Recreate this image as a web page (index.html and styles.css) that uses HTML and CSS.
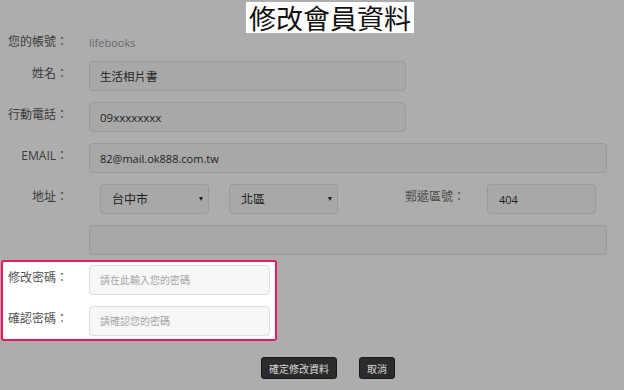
FILE: index.html
```html
<!DOCTYPE html>
<html lang="zh-Hant">
<head>
    <meta charset="UTF-8">
    <meta name="viewport" content="width=device-width, initial-scale=1.0">
    <title>修改會員資料</title>
    <link rel="stylesheet" href="styles.css">
</head>
<body>
    <div class="title-wrap">
        <h1 class="title">修改會員資料</h1>
    </div>
    <form class="member-form">
        <div class="row row-account">
            <label class="field-label">您的帳號：</label>
            <span class="account">lifebooks</span>
        </div>
        <div class="row">
            <label class="field-label">姓名：</label>
            <input class="field field-mid" type="text" value="生活相片書">
        </div>
        <div class="row">
            <label class="field-label">行動電話：</label>
            <input class="field field-mid" type="text" value="09xxxxxxxx">
        </div>
        <div class="row">
            <label class="field-label">EMAIL：</label>
            <input class="field field-wide" type="text" value="82@mail.ok888.com.tw">
        </div>
        <div class="row">
            <label class="field-label">地址：</label>
            <div class="select select-city"><span>台中市</span><i class="caret"></i></div>
            <div class="select select-area"><span>北區</span><i class="caret"></i></div>
            <label class="field-label zip-label">郵遞區號：</label>
            <input class="field field-zip" type="text" value="404">
        </div>
        <div class="row">
            <span class="field-label"></span>
            <input class="field field-wide" type="text" value="">
        </div>

        <!-- password block highlighted -->
        <div class="highlight">
            <div class="row">
                <label class="field-label">修改密碼：</label>
                <input class="field field-pw" type="password" placeholder="請在此輸入您的密碼">
            </div>
            <div class="row">
                <label class="field-label">確認密碼：</label>
                <input class="field field-pw" type="password" placeholder="請確認您的密碼">
            </div>
        </div>

        <div class="actions">
            <button type="button" class="btn">確定修改資料</button>
            <button type="button" class="btn">取消</button>
        </div>
    </form>
</body>
</html>
```

FILE: styles.css
```css
body {
    margin: 0;
    padding: 0;
    background-color: #adadad;
    font-family: 'Open Sans', 'Noto Sans CJK TC', sans-serif;
    color: #3c3c3c;
    height: 390px;
    overflow: hidden;
}
.title-wrap {
    padding-top: 2px;
    padding-left: 246px;
    height: 31px;
}
.title {
    box-sizing: border-box;
    display: inline-flex;
    align-items: center;
    height: 31px;
    margin: 0;
    padding: 0 3px;
    background-color: #fff;
    color: #111;
    font-family: 'Noto Sans CJK TC', sans-serif;
    font-weight: 400;
    font-size: 27px;
    line-height: 1;
}
.member-form {
    padding-left: 6px;
}
.row {
    display: flex;
    align-items: flex-start;
    margin-top: 11px;
}
.row-account {
    margin-top: 0;
    height: 18px;
    align-items: center;
}
.row-account + .row {
    margin-top: 10px;
}
.field-label {
    width: 62px;
    flex: none;
    margin-right: 21px;
    text-align: right;
    font-size: 12px;
    line-height: 18px;
    padding-top: 4px;
    color: #3a3a3a;
    white-space: nowrap;
}
.row-account .field-label {
    padding-top: 0;
}
.account {
    font-size: 11px;
    color: #676767;
}
.field {
    box-sizing: border-box;
    height: 30px;
    margin: 0;
    padding: 0 10px;
    border: 1px solid #9a9a9a;
    border-radius: 4px;
    background-color: #a8a8a8;
    font-family: 'Open Sans', 'Noto Sans CJK TC', sans-serif;
    font-size: 11px;
    color: #1e1e1e;
    outline: none;
}
.field-mid {
    width: 317px;
    font-size: 11.5px;
}
.field-wide {
    width: 518px;
}
.field-zip {
    width: 109px;
    padding-left: 11px;
}
.select {
    box-sizing: border-box;
    display: flex;
    align-items: center;
    justify-content: space-between;
    width: 109px;
    height: 30px;
    padding: 0 5px 0 11px;
    border: 1px solid #9a9a9a;
    border-radius: 4px;
    background-color: #a8a8a8;
    font-size: 12px;
    color: #1e1e1e;
}
.select-city {
    margin-left: 11px;
}
.select-area {
    margin-left: 20px;
}
.caret {
    width: 0;
    height: 0;
    border-left: 2.5px solid transparent;
    border-right: 2.5px solid transparent;
    border-top: 4px solid #222;
}
.zip-label {
    width: auto;
    margin-left: 67px;
    margin-right: 22px;
    color: #4a4a4a;
}
.highlight {
    box-sizing: border-box;
    width: 276px;
    margin-top: 5px;
    margin-left: -5px;
    padding: 3px 5px 3px 3px;
    border: 2px solid #e8195f;
    border-radius: 3px;
    background-color: #fff;
}
.highlight .row:first-child {
    margin-top: 0;
}
.highlight .field-label {
    color: #555;
}
.field-pw {
    width: 181px;
    background-color: #f7f7f7;
    border-color: #dedede;
    font-size: 10px;
}
.field-pw::placeholder {
    color: #a5a5a5;
}
.actions {
    display: flex;
    gap: 22px;
    margin-top: 16px;
    padding-left: 255px;
}
.btn {
    box-sizing: border-box;
    height: 22px;
    padding: 0 7px;
    border: 1px solid #181818;
    border-radius: 3px;
    background-color: #2b2b2b;
    color: #d8d8d8;
    font-family: 'Noto Sans CJK TC', sans-serif;
    font-size: 10px;
    cursor: pointer;
}
```
